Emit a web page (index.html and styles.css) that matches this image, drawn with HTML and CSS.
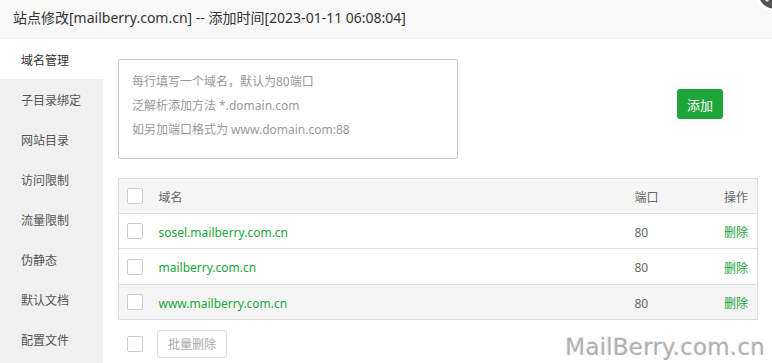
FILE: index.html
```html
<!DOCTYPE html>
<html lang="zh-CN">
<head>
<meta charset="utf-8">
<title>站点修改</title>
<link rel="stylesheet" href="styles.css">
</head>
<body>
<div class="layer">
  <div class="header">站点修改[mailberry.com.cn] -- 添加时间[2023-01-11 06:08:04]</div>
  <span class="close"><svg width="40" height="40" viewBox="0 0 40 40"><circle cx="20" cy="20" r="17" fill="#555" stroke="#fff" stroke-width="3"/><path d="M13 27 L27 13 M13 13 L27 27" stroke="#fff" stroke-width="3" stroke-linecap="round"/></svg></span>
  <div class="main">
    <ul class="side">
      <li class="active">域名管理</li>
      <li>子目录绑定</li>
      <li>网站目录</li>
      <li>访问限制</li>
      <li>流量限制</li>
      <li>伪静态</li>
      <li>默认文档</li>
      <li>配置文件</li>
    </ul>
    <div class="content">
      <div class="toprow">
        <div class="textbox">
          <div>每行填写一个域名，默认为80端口</div>
          <div>泛解析添加方法 *.domain.com</div>
          <div>如另加端口格式为 www.domain.com:88</div>
        </div>
        <button class="btn-add">添加</button>
      </div>
      <table class="tbl">
        <thead>
          <tr><th class="c-chk"><span class="chk"></span></th><th class="c-dom">域名</th><th class="c-port">端口</th><th class="c-op">操作</th></tr>
        </thead>
        <tbody>
          <tr><td class="c-chk"><span class="chk"></span></td><td class="c-dom green">sosel.mailberry.com.cn</td><td class="c-port">80</td><td class="c-op green">删除</td></tr>
          <tr class="tall"><td class="c-chk"><span class="chk"></span></td><td class="c-dom green">mailberry.com.cn</td><td class="c-port">80</td><td class="c-op green">删除</td></tr>
          <tr class="hover"><td class="c-chk"><span class="chk"></span></td><td class="c-dom green">www.mailberry.com.cn</td><td class="c-port">80</td><td class="c-op green">删除</td></tr>
        </tbody>
      </table>
      <div class="bottom">
        <span class="chk"></span>
        <button class="btn-batch">批量删除</button>
      </div>
    </div>
  </div>
  <div class="watermark">MailBerry.com.cn</div>
</div>
</body>
</html>
```

FILE: styles.css
```css
* { box-sizing: border-box; }
html, body { margin: 0; padding: 0; }
body {
  font-family: "Noto Sans", "Noto Sans CJK SC", sans-serif;
  font-size: 12px;
  color: #333;
  background: #fff;
  width: 772px;
  height: 363px;
  overflow: hidden;
}
.layer { position: relative; width: 772px; height: 363px; overflow: hidden; }
.header {
  height: 39px;
  line-height: 36px;
  padding-left: 13px;
  font-size: 14px;
  color: #333;
  background: #f8f8f8;
  border-bottom: 1px solid #eee;
  white-space: nowrap;
}
.close { position: absolute; right: -22px; top: -27px; width: 40px; height: 40px; }
.close svg { display: block; }
.main { display: flex; height: 324px; }
.side {
  list-style: none;
  margin: 0;
  padding: 0;
  width: 103px;
  flex: none;
  background: #f0f0f0;
}
.side li {
  height: 40px;
  line-height: 36px;
  padding: 4px 0 0 21px;
  color: #555;
  font-size: 12px;
}
.side li.active { background: #fff; color: #333; }
.content { flex: 1; padding: 20px 14px 0 15px; }
.toprow { display: flex; align-items: flex-start; }
.textbox {
  width: 340px;
  height: 100px;
  border: 1px solid #ccc;
  border-radius: 2px;
  padding: 10px 13px;
  line-height: 24px;
  color: #999;
}
.btn-add {
  margin: 30px 0 0 219px;
  width: 46px;
  height: 30px;
  border: none;
  border-radius: 3px;
  background: #20a53a;
  color: #fff;
  font-family: inherit;
  font-size: 13px;
  padding: 0;
}
.tbl {
  margin-top: 19px;
  width: 640px;
  border-collapse: collapse;
  border: 1px solid #ddd;
}
.tbl th, .tbl td {
  height: 35px;
  padding: 2px 0 0 0;
  text-align: left;
  font-weight: normal;
  color: #666;
  border-bottom: 1px solid #ddd;
}
.tbl tr.tall td { height: 36px; }
.tbl thead tr { background: #f5f5f5; }
.tbl tr.hover { background: #f5f5f5; }
.c-chk { width: 40px; padding-left: 8px !important; }
.c-chk .chk { margin-top: -2px; }
.c-dom { width: 476px; }
.c-port { width: 80px; }
.c-op { text-align: right !important; padding-right: 9px !important; }
.tbl td.green { color: #20a53a; }
.chk {
  display: block;
  width: 16px;
  height: 16px;
  border: 1px solid #ccc;
  border-radius: 2px;
  background: #fff;
}
.bottom { display: flex; align-items: center; margin-top: 10px; padding-left: 9px; }
.btn-batch {
  margin-left: 14px;
  width: 70px;
  height: 28px;
  border: 1px solid #ddd;
  border-radius: 3px;
  background: #fff;
  color: #aaa;
  font-family: inherit;
  font-size: 12px;
  padding: 0;
}
.watermark {
  position: absolute;
  right: 7px;
  bottom: 3px;
  font-family: "DejaVu Sans", sans-serif;
  font-size: 23px;
  color: #b0b0b0;
  text-shadow: 1px 1px 1px #fff, -1px -1px 0 #e8e8e8;
  letter-spacing: 0.2px;
}
```
